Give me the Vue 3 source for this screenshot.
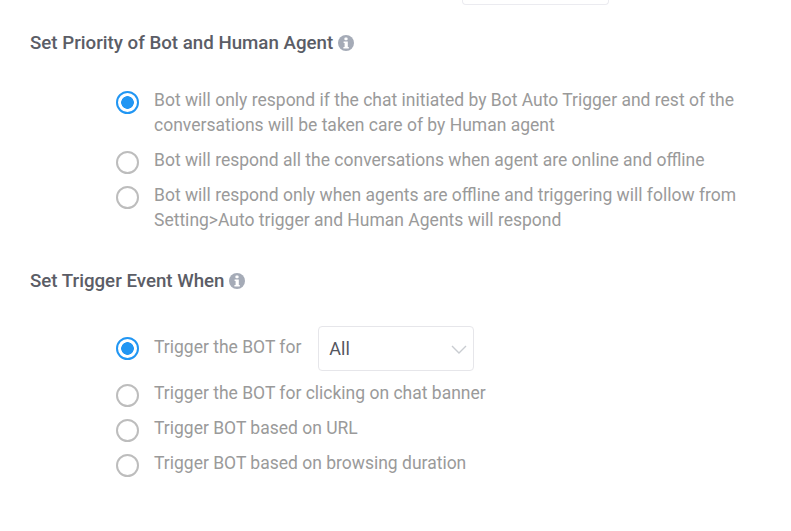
<script setup>
const priority = [
  { text: 'Bot will only respond if the chat initiated by Bot Auto Trigger and rest of the conversations will be taken care of by Human agent', on: true },
  { text: 'Bot will respond all the conversations when agent are online and offline' },
  { text: 'Bot will respond only when agents are offline and triggering will follow from Setting>Auto trigger and Human Agents will respond' }
]
const triggers = [
  'Trigger the BOT for clicking on chat banner',
  'Trigger BOT based on URL',
  'Trigger BOT based on browsing duration'
]
</script>

<template>
  <div class="page">
    <div class="top-box"></div>

    <h2 class="heading first">
      Set Priority of Bot and Human Agent
      <svg class="info" viewBox="0 0 16 16"><circle cx="8" cy="8" r="8" fill="#a5abb7"/><rect x="6.4" y="2.4" width="3.2" height="2.8" rx="1" fill="#fff"/><path d="M5.6 6.4h4.2v5.6h1v1.6H5.4V12h1.2V8H5.6z" fill="#fff"/></svg>
    </h2>
    <ul class="options first-list">
      <li v-for="o in priority" :key="o.text" class="option">
        <span class="radio" :class="{ on: o.on }"></span>
        <span class="label">{{ o.text }}</span>
      </li>
    </ul>

    <h2 class="heading second">
      Set Trigger Event When
      <svg class="info" viewBox="0 0 16 16"><circle cx="8" cy="8" r="8" fill="#a5abb7"/><rect x="6.4" y="2.4" width="3.2" height="2.8" rx="1" fill="#fff"/><path d="M5.6 6.4h4.2v5.6h1v1.6H5.4V12h1.2V8H5.6z" fill="#fff"/></svg>
    </h2>
    <ul class="options second-list">
      <li class="option select-row">
        <span class="radio on"></span>
        <span class="label">Trigger the BOT for</span>
        <div class="select">
          <span>All</span>
          <svg class="chev" viewBox="0 0 16 9"><path d="M1 1l7 7 7-7" fill="none" stroke="#c9ccd1" stroke-width="1.4"/></svg>
        </div>
      </li>
      <li v-for="t in triggers" :key="t" class="option">
        <span class="radio"></span>
        <span class="label">{{ t }}</span>
      </li>
    </ul>
  </div>
</template>

<style>
html, body { margin: 0; background: #fff; }
</style>

<style scoped>
.page {
  width: 791px;
  height: 531px;
  overflow: hidden;
  font-family: Roboto, "Liberation Sans", sans-serif;
  box-sizing: border-box;
}
.top-box {
  width: 147px;
  height: 5px;
  margin-left: 462px;
  box-sizing: border-box;
  border: 1px solid #ebebf0;
  border-top: 0;
  border-radius: 0 0 4px 4px;
}
.heading {
  display: flex;
  align-items: center;
  gap: 5px;
  margin: 0 0 0 30px;
  font-size: 18.72px;
  font-weight: 500;
  line-height: 24px;
  color: #5b5d66;
}
.heading.first { margin-top: 26px; }
.heading.second { margin-top: 36px; }
.info { width: 16px; height: 16px; }
.options {
  list-style: none;
  margin: 0 0 0 116px;
  padding: 0;
  display: flex;
  flex-direction: column;
  gap: 10px;
}
.first-list { margin-top: 33px; }
.second-list { margin-top: 33px; }
.option {
  display: flex;
  align-items: flex-start;
  gap: 15px;
  font-size: 17.5px;
  line-height: 25px;
  color: #9a9a9a;
  width: 630px;
}
.radio {
  flex: none;
  width: 23px;
  height: 23px;
  margin-top: 3px;
  margin-bottom: -1px;
  box-sizing: border-box;
  border: 2px solid #bdbdbd;
  border-radius: 50%;
  background: #fff;
}
.radio.on {
  border-color: #2196f3;
  background: radial-gradient(circle, #2196f3 0 6px, #fff 6.6px);
}
.select-row .radio { margin-top: 11px; }
.select-row .label { margin-top: 9px; }
.select {
  width: 156px;
  height: 45px;
  margin-left: 2px;
  box-sizing: border-box;
  border: 1px solid #e6e6ea;
  border-radius: 4px;
  display: flex;
  align-items: center;
  justify-content: space-between;
  padding: 0 6px 0 10px;
  color: #54565f;
  font-size: 18px;
}
.chev { width: 16px; height: 9px; margin-top: 2px; }
</style>
